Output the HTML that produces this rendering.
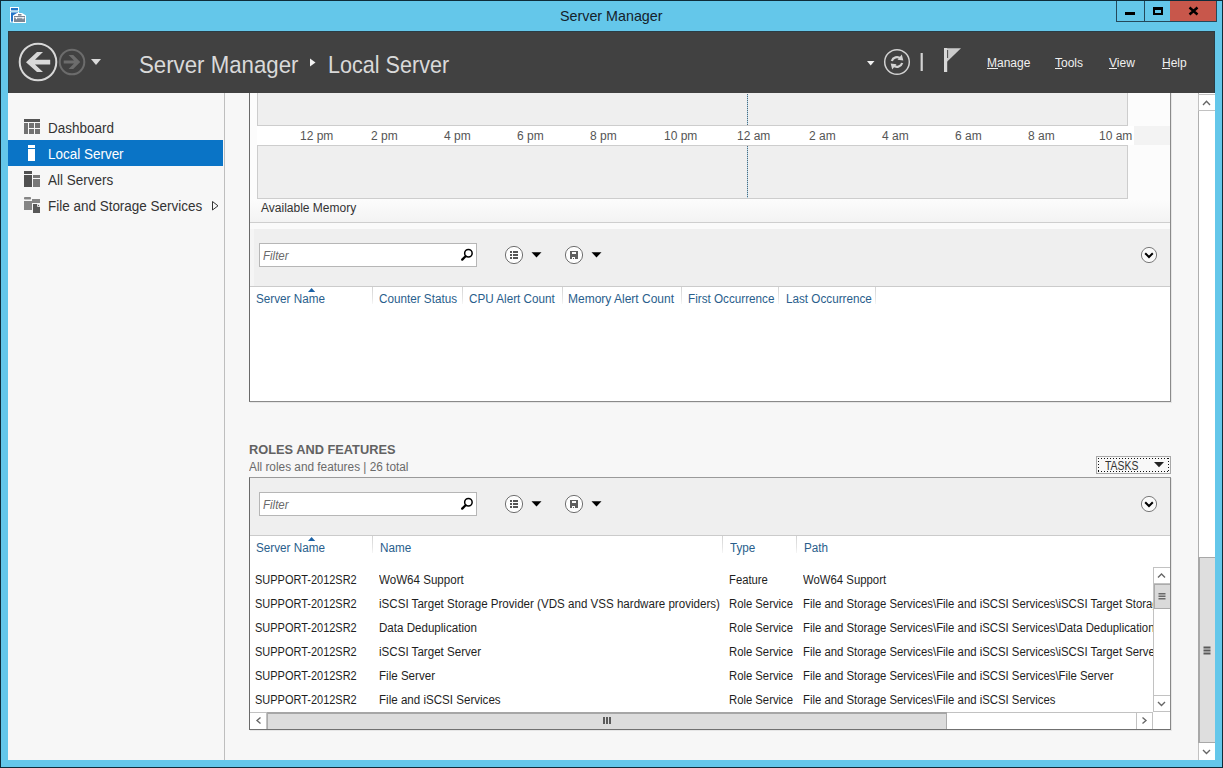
<!DOCTYPE html>
<html><head><meta charset="utf-8">
<style>
*{margin:0;padding:0;box-sizing:border-box}
html,body{width:1223px;height:768px;overflow:hidden}
body{position:relative;background:#64C7EA;font-family:"Liberation Sans",sans-serif;color:#333}
.a{position:absolute}
.t{position:absolute;line-height:0;white-space:nowrap}
svg{position:absolute;overflow:visible}
</style></head><body>
<!-- window frame -->
<!-- title icon -->
<svg style="left:0;top:0" width="40" height="30">
 <rect x="10" y="7" width="9" height="4.2" fill="#fff"/>
 <rect x="11" y="8" width="7" height="2.4" fill="#2276C9"/>
 <rect x="10" y="11.6" width="9" height="10.8" fill="#fff"/>
 <rect x="11" y="12.4" width="7" height="9.2" fill="#2276C9"/>
 <path d="M13 15.5 L17 13 H22 L26 15.5 V23 H13 Z" fill="#fff"/>
 <path d="M14 16 H25 V22 H14 Z" fill="#7B8796"/>
 <rect x="18" y="14" width="3.5" height="1.6" fill="#7B8796"/>
 <rect x="14.5" y="17.2" width="10" height="1" fill="#fff"/>
 <rect x="16" y="17.2" width="1" height="2" fill="#fff"/>
 <rect x="22.5" y="17.2" width="1" height="2" fill="#fff"/>
</svg>
<div class="t" style="left:560px;top:16px;font-size:14.3px;color:#14222B">Server Manager</div>
<!-- window buttons -->
<div class="a" style="left:1116px;top:0;width:29px;height:22px;border:1px solid #24485A;border-top:0"></div>
<div class="a" style="left:1144px;top:0;width:27px;height:22px;border:1px solid #24485A;border-top:0;border-left:0"></div>
<div class="a" style="left:1170px;top:0;width:47px;height:22px;background:#C8574B;border:1px solid #24485A;border-top:0;border-left:0"></div>
<div class="a" style="left:1125px;top:12px;width:10px;height:3px;background:#000"></div>
<div class="a" style="left:1153px;top:7px;width:10px;height:8px;border:2px solid #000;border-top-width:3px"></div>
<svg style="left:0;top:0" width="1223" height="30"><path d="M1189.5 7.5 L1197.5 14.5 M1197.5 7.5 L1189.5 14.5" stroke="#000" stroke-width="2.4"/></svg>

<!-- content -->
<div class="a" style="left:8px;top:31px;width:1207px;height:729px;background:#F7F7F7"></div>
<!-- header -->
<div class="a" style="left:8px;top:31px;width:1207px;height:62px;background:#414141;border:1px solid #2B3C44;border-bottom:0"></div>
<svg style="left:0;top:0" width="120" height="100">
 <circle cx="38" cy="62" r="18.3" fill="none" stroke="#D8D8D8" stroke-width="2"/>
 <path d="M26 62.2 L37 52 L43 52 L35 59.8 L50.2 59.8 L50.2 64.5 L35 64.5 L43 72 L37 72 Z" fill="#D8D8D8"/>
 <circle cx="72" cy="62" r="12.3" fill="none" stroke="#6C6C6C" stroke-width="2"/>
 <path d="M80.2 62 L73.2 55 L68.6 55 L74 60.4 L63.7 60.4 L63.7 63.6 L74 63.6 L68.6 69 L73.2 69 Z" fill="#6C6C6C"/>
 <path d="M91 59 H101 L96 65 Z" fill="#DADADA"/>
</svg>
<div class="t" style="left:139px;top:65px;font-size:24.4px;color:#D9D9D9;transform:scaleX(0.912);transform-origin:0 0">Server Manager</div>
<svg style="left:0;top:0" width="400" height="100"><path d="M310 58.5 L315.5 62.5 L310 66.5 Z" fill="#F2F2F2"/></svg>
<div class="t" style="left:328px;top:65px;font-size:24.4px;color:#D9D9D9;transform:scaleX(0.885);transform-origin:0 0">Local Server</div>
<svg style="left:0;top:0" width="1223" height="100">
 <path d="M867 61 H874.5 L870.7 65.5 Z" fill="#F0F0F0"/>
 <circle cx="897" cy="62" r="12.3" fill="none" stroke="#D2D2D2" stroke-width="1.5"/>
 <path d="M891.8 61 A5.4 5.4 0 0 1 900.6 58.6" fill="none" stroke="#D2D2D2" stroke-width="2.2"/>
 <path d="M901.8 54.5 L903.3 60.5 L897.5 59.8 Z" fill="#D2D2D2"/>
 <path d="M902.2 63 A5.4 5.4 0 0 1 893.4 65.4" fill="none" stroke="#D2D2D2" stroke-width="2.2"/>
 <path d="M892.2 69.5 L890.7 63.5 L896.5 64.2 Z" fill="#D2D2D2"/>
 <rect x="920.6" y="53" width="2.2" height="18" fill="#D2D2D2"/>
 <rect x="944" y="48" width="3.2" height="24" fill="#D8D8D8"/>
 <path d="M947 48.3 H961 L947 61.8 Z" fill="#CBCBCB"/>
 <rect x="947.1" y="50" width="1" height="8" fill="#4A4A4A"/>
</svg>
<div class="t" style="left:987px;top:63px;font-size:12px;color:#F0F0F0">Manage</div>
<div class="a" style="left:987px;top:68px;width:11px;height:1px;background:#F0F0F0"></div>
<div class="t" style="left:1055px;top:63px;font-size:12px;color:#F0F0F0">Tools</div>
<div class="a" style="left:1055px;top:68px;width:7px;height:1px;background:#F0F0F0"></div>
<div class="t" style="left:1109px;top:63px;font-size:12px;color:#F0F0F0">View</div>
<div class="a" style="left:1109px;top:68px;width:8px;height:1px;background:#F0F0F0"></div>
<div class="t" style="left:1162px;top:63px;font-size:12px;color:#F0F0F0">Help</div>
<div class="a" style="left:1162px;top:68px;width:8px;height:1px;background:#F0F0F0"></div>

<!-- sidebar -->
<div class="a" style="left:224px;top:93px;width:1px;height:667px;background:#BEBEBE"></div>
<div class="a" style="left:8px;top:140px;width:215px;height:26px;background:#0A74C6"></div>
<svg style="left:0;top:0" width="230" height="230">
 <rect x="24" y="119" width="16" height="3" fill="#555"/>
 <rect x="24" y="123" width="4" height="11" fill="#727272"/>
 <rect x="29" y="123" width="5" height="5" fill="#727272"/>
 <rect x="35" y="123" width="5" height="5" fill="#727272"/>
 <rect x="29" y="129" width="5" height="5" fill="#727272"/>
 <rect x="35" y="129" width="5" height="5" fill="#727272"/>
 <rect x="28" y="145" width="7" height="3" fill="#fff"/>
 <rect x="28" y="149" width="7" height="12" fill="#fff"/>
 <rect x="24" y="171" width="8" height="3" fill="#505050"/>
 <rect x="24" y="175" width="8" height="12" fill="#505050"/>
 <rect x="33" y="175" width="7" height="3" fill="#787878"/>
 <rect x="33" y="179" width="7" height="8" fill="#787878"/>
 <rect x="24" y="197" width="7" height="2.6" rx="0.8" fill="#858585"/>
 <rect x="24" y="201" width="8" height="9" fill="#858585"/>
 <rect x="32" y="199" width="8" height="4" fill="#858585"/>
 <rect x="32" y="203" width="8" height="1" fill="#F7F7F7"/>
 <path d="M33 204 H37.5 L40 206.5 V213 H33 Z" fill="#585858"/>
 <path d="M37.5 204 V206.5 H40" fill="none" stroke="#F7F7F7" stroke-width="0.8"/>
 <path d="M212.5 201.5 L218 205.8 L212.5 210 Z" fill="none" stroke="#333" stroke-width="1"/>
</svg>
<div class="t" style="left:48px;top:128px;font-size:14px;color:#333;transform:scaleX(0.962);transform-origin:0 0">Dashboard</div>
<div class="t" style="left:48px;top:154px;font-size:14px;color:#fff;transform:scaleX(0.962);transform-origin:0 0">Local Server</div>
<div class="t" style="left:48px;top:180px;font-size:14px;color:#333;transform:scaleX(0.962);transform-origin:0 0">All Servers</div>
<div class="t" style="left:48px;top:206px;font-size:14px;color:#333;transform:scaleX(0.962);transform-origin:0 0">File and Storage Services</div>

<!-- PANEL 1 (performance) -->
<div class="a" style="left:249px;top:93px;width:922px;height:309px;border:1px solid #8A8A8A;border-left-color:#6A6A6A;border-top:0;background:#FCFCFC"></div>
<div class="a" style="left:250px;top:200px;width:920px;height:22px;background:linear-gradient(#FCFCFC,#F3F3F3)"></div>
<div class="a" style="left:257px;top:93px;width:871px;height:33px;background:#EFEFEF;border:1px solid #CDCDCD;border-top:0"></div>
<div class="a" style="left:257px;top:126px;width:877px;height:19px;background:#fff"></div>
<div class="a" style="left:1134px;top:126px;width:36px;height:19px;background:#F3F3F3"></div>
<div class="a" style="left:257px;top:145px;width:871px;height:54px;background:#EFEFEF;border:1px solid #CDCDCD"></div>
<div class="a" style="left:747px;top:94px;width:1px;height:31px;background:repeating-linear-gradient(#52697A 0 1px,#A9D6EC 1px 2px)"></div>
<div class="a" style="left:747px;top:146px;width:1px;height:52px;background:repeating-linear-gradient(#52697A 0 1px,#A9D6EC 1px 2px)"></div>
<div class="t" style="left:300px;top:136px;font-size:12px;color:#555">12 pm</div>
<div class="t" style="left:371px;top:136px;font-size:12px;color:#555">2 pm</div>
<div class="t" style="left:444px;top:136px;font-size:12px;color:#555">4 pm</div>
<div class="t" style="left:517px;top:136px;font-size:12px;color:#555">6 pm</div>
<div class="t" style="left:590px;top:136px;font-size:12px;color:#555">8 pm</div>
<div class="t" style="left:664px;top:136px;font-size:12px;color:#555">10 pm</div>
<div class="t" style="left:737px;top:136px;font-size:12px;color:#555">12 am</div>
<div class="t" style="left:809px;top:136px;font-size:12px;color:#555">2 am</div>
<div class="t" style="left:882px;top:136px;font-size:12px;color:#555">4 am</div>
<div class="t" style="left:955px;top:136px;font-size:12px;color:#555">6 am</div>
<div class="t" style="left:1028px;top:136px;font-size:12px;color:#555">8 am</div>
<div class="t" style="left:1099px;top:136px;font-size:12px;color:#555">10 am</div>
<div class="t" style="left:261px;top:208px;font-size:12px;color:#333">Available Memory</div>
<div class="a" style="left:250px;top:222px;width:920px;height:1px;background:#CECECE"></div>
<div class="a" style="left:250px;top:223px;width:920px;height:6px;background:#FAFAFA"></div>
<div class="a" style="left:250px;top:229px;width:920px;height:58px;background:#EFEFEF;border-bottom:1px solid #CBCBCB"></div>
<div class="a" style="left:250px;top:229px;width:4px;height:57px;background:#F5F5F5"></div>
<div class="a" style="left:250px;top:287px;width:920px;height:114px;background:#fff"></div>
<div class="a" style="left:1171px;top:93px;width:1px;height:310px;background:#E6E6E6"></div>
<div class="a" style="left:250px;top:402px;width:922px;height:1px;background:#E6E6E6"></div>
<!-- SECTION 2 -->
<div class="t" style="left:249px;top:450px;font-size:12.8px;font-weight:bold;color:#626262">ROLES AND FEATURES</div>
<div class="t" style="left:248.5px;top:467px;font-size:12px;color:#6A6A6A;transform:scaleX(0.985);transform-origin:0 0">All roles and features | 26 total</div>
<div class="a" style="left:1096px;top:456px;width:75px;height:18px;border:1px solid #A8A8A8;background:#F8F8F8"></div>
<div class="a" style="left:1098px;top:458px;width:71px;height:1px;background:repeating-linear-gradient(90deg,#111 0 1px,transparent 1px 3px)"></div>
<div class="a" style="left:1098px;top:471px;width:71px;height:1px;background:repeating-linear-gradient(90deg,#111 0 1px,transparent 1px 3px)"></div>
<div class="a" style="left:1098px;top:458px;width:1px;height:14px;background:repeating-linear-gradient(#111 0 1px,transparent 1px 3px)"></div>
<div class="a" style="left:1168px;top:458px;width:1px;height:14px;background:repeating-linear-gradient(#111 0 1px,transparent 1px 3px)"></div>
<div class="t" style="left:1105px;top:466px;font-size:12px;color:#333;transform:scaleX(0.87);transform-origin:0 0">TASKS</div>
<svg style="left:0;top:0" width="1223" height="768"><path d="M1154 462 H1164 L1159 467.3 Z" fill="#222"/></svg>
<div class="a" style="left:249px;top:477px;width:922px;height:253px;border:1px solid #888;border-left-color:#6A6A6A;border-top-color:#9A9A9A;border-bottom-color:#707070;background:#fff"></div>
<div class="a" style="left:250px;top:478px;width:920px;height:58px;background:#EFEFEF;border-bottom:1px solid #CBCBCB"></div>
<div class="a" style="left:259px;top:243px;width:218px;height:24px;border:1px solid #B6B6B6;background:#fff"></div>
<div class="t" style="left:263px;top:256px;font-size:12px;font-style:italic;color:#6A6A6A;transform:scaleX(0.96);transform-origin:0 0">Filter</div>
<svg style="left:0;top:0" width="1223" height="768">
 <circle cx="468.4" cy="253.3" r="3.75" fill="none" stroke="#000" stroke-width="1.5"/>
 <path d="M465.6 256.2 L462.2 259.6" stroke="#000" stroke-width="2.3" stroke-linecap="round"/>
 <circle cx="514" cy="255" r="8.6" fill="#FDFDFD" stroke="#707070" stroke-width="1"/>
 <rect x="510" y="251" width="2" height="2" fill="#555"/><rect x="513" y="251" width="5" height="2" fill="#555"/>
 <rect x="510" y="254" width="2" height="2" fill="#555"/><rect x="513" y="254" width="5" height="2" fill="#555"/>
 <rect x="510" y="257" width="2" height="2" fill="#555"/><rect x="513" y="257" width="5" height="2" fill="#555"/>
 <path d="M531.5 252.2 H541.5 L536.5 257.4 Z" fill="#000"/>
 <circle cx="574" cy="255" r="8.6" fill="#FDFDFD" stroke="#707070" stroke-width="1"/>
 <rect x="570" y="251" width="8" height="8" fill="#606060"/>
 <rect x="572" y="252" width="4" height="2" fill="#FDFDFD"/>
 <rect x="572" y="257" width="3" height="2" fill="#FDFDFD"/>
 <rect x="573" y="258" width="1" height="1" fill="#606060"/>
 <path d="M591.5 252.2 H601.5 L596.5 257.4 Z" fill="#000"/>
 <circle cx="1149" cy="255" r="7.6" fill="#FAFAFA" stroke="#7A7A7A" stroke-width="1"/>
 <path d="M1145.2 253.2 L1149 257 L1152.8 253.2" fill="none" stroke="#000" stroke-width="2"/>
</svg>
<div class="t" style="left:256px;top:299px;font-size:12px;color:#295E8C;transform:scaleX(0.975);transform-origin:0 0">Server Name</div>
<div class="t" style="left:379px;top:299px;font-size:12px;color:#295E8C;transform:scaleX(0.975);transform-origin:0 0">Counter Status</div>
<div class="t" style="left:469px;top:299px;font-size:12px;color:#295E8C;transform:scaleX(0.975);transform-origin:0 0">CPU Alert Count</div>
<div class="t" style="left:568px;top:299px;font-size:12px;color:#295E8C;transform:scaleX(1.0);transform-origin:0 0">Memory Alert Count</div>
<div class="t" style="left:688px;top:299px;font-size:12px;color:#295E8C;transform:scaleX(0.975);transform-origin:0 0">First Occurrence</div>
<div class="t" style="left:786px;top:299px;font-size:12px;color:#295E8C;transform:scaleX(0.975);transform-origin:0 0">Last Occurrence</div>
<div class="a" style="left:372px;top:287px;width:1px;height:17px;background:linear-gradient(#D4D4D4,#E6E6E6 70%,#F6F6F6)"></div>
<div class="a" style="left:462px;top:287px;width:1px;height:17px;background:linear-gradient(#D4D4D4,#E6E6E6 70%,#F6F6F6)"></div>
<div class="a" style="left:562px;top:287px;width:1px;height:17px;background:linear-gradient(#D4D4D4,#E6E6E6 70%,#F6F6F6)"></div>
<div class="a" style="left:681px;top:287px;width:1px;height:17px;background:linear-gradient(#D4D4D4,#E6E6E6 70%,#F6F6F6)"></div>
<div class="a" style="left:778px;top:287px;width:1px;height:17px;background:linear-gradient(#D4D4D4,#E6E6E6 70%,#F6F6F6)"></div>
<div class="a" style="left:875px;top:287px;width:1px;height:17px;background:linear-gradient(#D4D4D4,#E6E6E6 70%,#F6F6F6)"></div>
<svg style="left:0;top:0" width="1223" height="768"><path d="M308 292 H315.2 L311.6 288 Z" fill="#1C62A6"/></svg>
<div class="a" style="left:259px;top:492px;width:218px;height:24px;border:1px solid #B6B6B6;background:#fff"></div>
<div class="t" style="left:263px;top:505px;font-size:12px;font-style:italic;color:#6A6A6A;transform:scaleX(0.96);transform-origin:0 0">Filter</div>
<svg style="left:0;top:0" width="1223" height="768">
 <circle cx="468.4" cy="502.3" r="3.75" fill="none" stroke="#000" stroke-width="1.5"/>
 <path d="M465.6 505.2 L462.2 508.6" stroke="#000" stroke-width="2.3" stroke-linecap="round"/>
 <circle cx="514" cy="504" r="8.6" fill="#FDFDFD" stroke="#707070" stroke-width="1"/>
 <rect x="510" y="500" width="2" height="2" fill="#555"/><rect x="513" y="500" width="5" height="2" fill="#555"/>
 <rect x="510" y="503" width="2" height="2" fill="#555"/><rect x="513" y="503" width="5" height="2" fill="#555"/>
 <rect x="510" y="506" width="2" height="2" fill="#555"/><rect x="513" y="506" width="5" height="2" fill="#555"/>
 <path d="M531.5 501.2 H541.5 L536.5 506.4 Z" fill="#000"/>
 <circle cx="574" cy="504" r="8.6" fill="#FDFDFD" stroke="#707070" stroke-width="1"/>
 <rect x="570" y="500" width="8" height="8" fill="#606060"/>
 <rect x="572" y="501" width="4" height="2" fill="#FDFDFD"/>
 <rect x="572" y="506" width="3" height="2" fill="#FDFDFD"/>
 <rect x="573" y="507" width="1" height="1" fill="#606060"/>
 <path d="M591.5 501.2 H601.5 L596.5 506.4 Z" fill="#000"/>
 <circle cx="1149" cy="504" r="7.6" fill="#FAFAFA" stroke="#7A7A7A" stroke-width="1"/>
 <path d="M1145.2 502.2 L1149 506 L1152.8 502.2" fill="none" stroke="#000" stroke-width="2"/>
</svg>
<div class="t" style="left:256px;top:548px;font-size:12px;color:#295E8C;transform:scaleX(0.975);transform-origin:0 0">Server Name</div>
<div class="t" style="left:380px;top:548px;font-size:12px;color:#295E8C;transform:scaleX(0.975);transform-origin:0 0">Name</div>
<div class="t" style="left:730px;top:548px;font-size:12px;color:#295E8C;transform:scaleX(0.975);transform-origin:0 0">Type</div>
<div class="t" style="left:804px;top:548px;font-size:12px;color:#295E8C;transform:scaleX(0.975);transform-origin:0 0">Path</div>
<div class="a" style="left:372px;top:536px;width:1px;height:17px;background:linear-gradient(#D4D4D4,#E6E6E6 70%,#F6F6F6)"></div>
<div class="a" style="left:722px;top:536px;width:1px;height:17px;background:linear-gradient(#D4D4D4,#E6E6E6 70%,#F6F6F6)"></div>
<div class="a" style="left:796px;top:536px;width:1px;height:17px;background:linear-gradient(#D4D4D4,#E6E6E6 70%,#F6F6F6)"></div>
<svg style="left:0;top:0" width="1223" height="768"><path d="M308 541 H315.2 L311.6 537 Z" fill="#1C62A6"/></svg>
<div class="a" style="left:250px;top:560px;width:903px;height:152px;overflow:hidden">
<div class="t" style="left:5px;top:20px;font-size:12px;color:#1E1E1E;transform:scaleX(0.915);transform-origin:0 0">SUPPORT-2012SR2</div>
<div class="t" style="left:129px;top:20px;font-size:12px;color:#1E1E1E;transform:scaleX(0.965);transform-origin:0 0">WoW64 Support</div>
<div class="t" style="left:479px;top:20px;font-size:12px;color:#1E1E1E;transform:scaleX(0.94);transform-origin:0 0">Feature</div>
<div class="t" style="left:553px;top:20px;font-size:12px;color:#1E1E1E;transform:scaleX(0.946);transform-origin:0 0">WoW64 Support</div>
<div class="t" style="left:5px;top:44px;font-size:12px;color:#1E1E1E;transform:scaleX(0.915);transform-origin:0 0">SUPPORT-2012SR2</div>
<div class="t" style="left:129px;top:44px;font-size:12px;color:#1E1E1E;transform:scaleX(0.965);transform-origin:0 0">iSCSI Target Storage Provider (VDS and VSS hardware providers)</div>
<div class="t" style="left:479px;top:44px;font-size:12px;color:#1E1E1E;transform:scaleX(0.94);transform-origin:0 0">Role Service</div>
<div class="t" style="left:553px;top:44px;font-size:12px;color:#1E1E1E;transform:scaleX(0.946);transform-origin:0 0">File and Storage Services\File and iSCSI Services\iSCSI Target Storage Provider (VDS and VSS hardware providers)</div>
<div class="t" style="left:5px;top:68px;font-size:12px;color:#1E1E1E;transform:scaleX(0.915);transform-origin:0 0">SUPPORT-2012SR2</div>
<div class="t" style="left:129px;top:68px;font-size:12px;color:#1E1E1E;transform:scaleX(0.965);transform-origin:0 0">Data Deduplication</div>
<div class="t" style="left:479px;top:68px;font-size:12px;color:#1E1E1E;transform:scaleX(0.94);transform-origin:0 0">Role Service</div>
<div class="t" style="left:553px;top:68px;font-size:12px;color:#1E1E1E;transform:scaleX(0.946);transform-origin:0 0">File and Storage Services\File and iSCSI Services\Data Deduplication</div>
<div class="t" style="left:5px;top:92px;font-size:12px;color:#1E1E1E;transform:scaleX(0.915);transform-origin:0 0">SUPPORT-2012SR2</div>
<div class="t" style="left:129px;top:92px;font-size:12px;color:#1E1E1E;transform:scaleX(0.965);transform-origin:0 0">iSCSI Target Server</div>
<div class="t" style="left:479px;top:92px;font-size:12px;color:#1E1E1E;transform:scaleX(0.94);transform-origin:0 0">Role Service</div>
<div class="t" style="left:553px;top:92px;font-size:12px;color:#1E1E1E;transform:scaleX(0.946);transform-origin:0 0">File and Storage Services\File and iSCSI Services\iSCSI Target Server</div>
<div class="t" style="left:5px;top:116px;font-size:12px;color:#1E1E1E;transform:scaleX(0.915);transform-origin:0 0">SUPPORT-2012SR2</div>
<div class="t" style="left:129px;top:116px;font-size:12px;color:#1E1E1E;transform:scaleX(0.965);transform-origin:0 0">File Server</div>
<div class="t" style="left:479px;top:116px;font-size:12px;color:#1E1E1E;transform:scaleX(0.94);transform-origin:0 0">Role Service</div>
<div class="t" style="left:553px;top:116px;font-size:12px;color:#1E1E1E;transform:scaleX(0.946);transform-origin:0 0">File and Storage Services\File and iSCSI Services\File Server</div>
<div class="t" style="left:5px;top:140px;font-size:12px;color:#1E1E1E;transform:scaleX(0.915);transform-origin:0 0">SUPPORT-2012SR2</div>
<div class="t" style="left:129px;top:140px;font-size:12px;color:#1E1E1E;transform:scaleX(0.965);transform-origin:0 0">File and iSCSI Services</div>
<div class="t" style="left:479px;top:140px;font-size:12px;color:#1E1E1E;transform:scaleX(0.94);transform-origin:0 0">Role Service</div>
<div class="t" style="left:553px;top:140px;font-size:12px;color:#1E1E1E;transform:scaleX(0.946);transform-origin:0 0">File and Storage Services\File and iSCSI Services</div>
</div>
<div class="a" style="left:1153px;top:567px;width:17px;height:145px;background:#fff;border-left:1px solid #C2C2C2"></div>
<div class="a" style="left:1153px;top:567px;width:17px;height:17px;border:1px solid #C2C2C2;border-right:0;background:#fff"></div>
<div class="a" style="left:1154px;top:584px;width:16px;height:25px;border:1px solid #ABABAB;border-right:0;background:#DADADA"></div>
<div class="a" style="left:1153px;top:695px;width:17px;height:17px;border:1px solid #C2C2C2;border-right:0;background:#fff"></div>
<div class="a" style="left:250px;top:712px;width:903px;height:17px;background:#fff;border-top:1px solid #C2C2C2"></div>
<div class="a" style="left:1171px;top:478px;width:1px;height:253px;background:#E6E6E6"></div>
<div class="a" style="left:250px;top:730px;width:922px;height:1px;background:#E6E6E6"></div>
<div class="a" style="left:250px;top:712px;width:17px;height:17px;border-right:1px solid #C2C2C2"></div>
<div class="a" style="left:267px;top:712px;width:680px;height:17px;border:1px solid #ABABAB;border-bottom:0;border-top:2px solid #A6A6A6;background:#DCDCDC"></div>
<div class="a" style="left:1136px;top:712px;width:17px;height:17px;border:1px solid #C2C2C2;border-bottom:0;border-right:1px solid #C2C2C2"></div>
<svg style="left:0;top:0" width="1223" height="768">
 <path d="M1158 577.5 L1161.5 574 L1165 577.5" fill="none" stroke="#666" stroke-width="1.35"/>
 <rect x="1158.5" y="593" width="7" height="1.5" fill="#6A6A6A"/><rect x="1158.5" y="595.5" width="7" height="1.5" fill="#6A6A6A"/><rect x="1158.5" y="598" width="7" height="1.5" fill="#6A6A6A"/>
 <path d="M1158 702 L1161.5 705.5 L1165 702" fill="none" stroke="#666" stroke-width="1.35"/>
 <path d="M260.5 717.5 L257 720.5 L260.5 723.5" fill="none" stroke="#666" stroke-width="1.35"/>
 <path d="M1142.5 717.5 L1146 720.5 L1142.5 723.5" fill="none" stroke="#666" stroke-width="1.35"/>
 <rect x="603" y="717" width="2" height="7" fill="#5A5A5A"/><rect x="606" y="717" width="2" height="7" fill="#5A5A5A"/><rect x="609" y="717" width="2" height="7" fill="#5A5A5A"/>
</svg>
<!-- main scrollbar -->
<div class="a" style="left:1198px;top:93px;width:17px;height:667px;background:#fff;border-left:1px solid #AFAFAF"></div>
<div class="a" style="left:1198px;top:94px;width:17px;height:17px;border:1px solid #C2C2C2;border-right:0"></div>
<div class="a" style="left:1198px;top:557px;width:17px;height:186px;border-left:2px solid #A8A8A8;border-top:1px solid #A8A8A8;border-bottom:1px solid #A8A8A8;background:#DEDEDE"></div>
<div class="a" style="left:1198px;top:743px;width:17px;height:17px;border-left:1px solid #C2C2C2"></div>
<svg style="left:0;top:0" width="1223" height="768">
 <path d="M1203 105 L1206.5 101.3 L1210 105" fill="none" stroke="#666" stroke-width="1.35"/>
 <rect x="1203.5" y="646.5" width="7" height="2" fill="#5A5A5A"/><rect x="1203.5" y="649.5" width="7" height="2" fill="#5A5A5A"/><rect x="1203.5" y="652.5" width="7" height="2" fill="#5A5A5A"/>
 <path d="M1203 750 L1206.5 753.5 L1210 750" fill="none" stroke="#666" stroke-width="1.35"/>
</svg><div class="a" style="left:0;top:0;width:1223px;height:768px;border:1px solid #0E2C3A"></div>
</body></html>
